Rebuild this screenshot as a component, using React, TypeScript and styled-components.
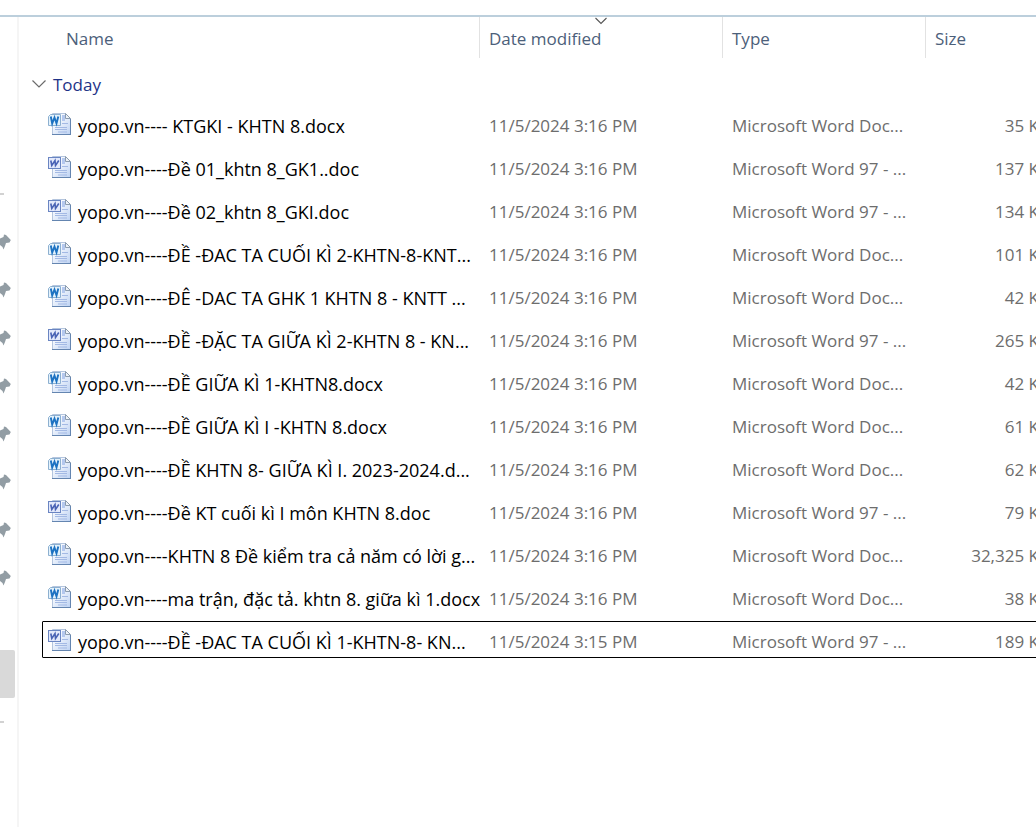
import React from "react";
import styled, { createGlobalStyle } from "styled-components";

const GlobalStyle = createGlobalStyle`
  *, *::before, *::after { box-sizing: border-box; }
  html, body, #root { height: 100%; }
  body {
    margin: 0;
    background: #fff;
    color: #000;
    font-family: "Segoe UI", "Open Sans", "Noto Sans", sans-serif;
    font-size: 17px;
    line-height: 24px;
  }
`;

const Window = styled.div`
  display: flex;
  flex-direction: column;
  min-height: 100%;
  overflow: hidden;
`;

const AddressStrip = styled.header`
  height: 17px;
  flex: none;
  border-bottom: 2px solid #bccfdc;
`;

const Body = styled.div`
  display: flex;
  flex: 1;
`;

const Sidebar = styled.nav`
  flex: none;
  width: 19px;
  padding: 176px 2px 0 0;
  border-right: 2px solid #f5f5f5;
`;

const Divider = styled.hr`
  width: 4px;
  height: 2px;
  margin: 0 0 23px;
  border: 0;
  background: #d2d2d2;
`;

const PlaceButton = styled.button<{ $selected?: boolean }>`
  display: flex;
  align-items: center;
  width: 100%;
  height: 48px;
  padding: 0;
  border: 0;
  border-radius: 0 2px 2px 0;
  background: ${(p) => (p.$selected ? "#d9d9d9" : "transparent")};
`;

const SelectedPlace = styled.div`
  margin-bottom: 23px;
`;

const Main = styled.main`
  flex: 1;
  min-width: 0;
  overflow: hidden;
`;

const FileTable = styled.table`
  display: block;
  width: max-content;
  min-width: 100%;
  padding-left: 23px;
`;

const Head = styled.thead`
  display: block;
`;

const Group = styled.tbody`
  display: block;
`;

const columns = "438px 243px 203px minmax(144px, 1fr)";

const HeadRow = styled.tr`
  display: grid;
  grid-template-columns: ${columns};
`;

const HeadCell = styled.th<{ $inset?: boolean }>`
  position: relative;
  height: 41px;
  padding: 0 0 0 ${(p) => (p.$inset ? "24px" : "9px")};
  border-right: 1px solid #e2e2e2;
  text-align: left;
  font-weight: 400;
`;

const SortButton = styled.button`
  height: 41px;
  padding: 2px 0 0;
  border: 0;
  background: none;
  color: #4c607a;
  font: inherit;
`;

const SortMark = styled.svg`
  position: absolute;
  top: 0;
  left: 50%;
  margin-left: -6px;
`;

const GroupRow = styled.tr`
  display: block;
  height: 47px;
`;

const GroupCell = styled.th`
  display: block;
  padding: 0;
  text-align: left;
  font-weight: 400;
`;

const GroupButton = styled.button`
  display: flex;
  align-items: center;
  gap: 7px;
  height: 53px;
  margin-left: -10px;
  padding: 0;
  border: 0;
  background: none;
  color: #1e3287;
  font: inherit;
`;

const FileRow = styled.tr<{ $focused?: boolean }>`
  display: grid;
  grid-template-columns: ${columns};
  height: 37px;
  margin-bottom: 6px;
  border-radius: 1px;
  outline: ${(p) => (p.$focused ? "1px solid #000" : "none")};
  outline-offset: -1px;
`;

const Cell = styled.td<{ $end?: boolean }>`
  padding: 9px ${(p) => (p.$end ? "20px" : "0")} 0 9px;
  color: #6d6d6d;
  text-align: ${(p) => (p.$end ? "right" : "left")};
  white-space: nowrap;
`;

const NameCell = styled(Cell)`
  display: flex;
  gap: 6px;
  padding: 9px 0 0 6px;
  color: #000;
  font-size: 18px;
`;

const FileIcon = styled.svg`
  flex: none;
  margin-top: -2px;
`;

type Kind = "docx" | "doc";

const files: { name: string; kind: Kind; time: string; size: string }[] = [
  { name: "yopo.vn---- KTGKI - KHTN 8.docx", kind: "docx", time: "3:16", size: "35" },
  { name: "yopo.vn----Đề 01_khtn 8_GK1..doc", kind: "doc", time: "3:16", size: "137" },
  { name: "yopo.vn----Đề 02_khtn 8_GKI.doc", kind: "doc", time: "3:16", size: "134" },
  { name: "yopo.vn----ĐỀ -ĐAC TA CUỐI KÌ 2-KHTN-8-KNT...", kind: "docx", time: "3:16", size: "101" },
  { name: "yopo.vn----ĐÊ -DAC TA GHK 1 KHTN 8 - KNTT ...", kind: "docx", time: "3:16", size: "42" },
  { name: "yopo.vn----ĐỀ -ĐẶC TA GIỮA KÌ 2-KHTN 8 - KN...", kind: "doc", time: "3:16", size: "265" },
  { name: "yopo.vn----ĐỀ GIỮA KÌ 1-KHTN8.docx", kind: "docx", time: "3:16", size: "42" },
  { name: "yopo.vn----ĐỀ GIỮA KÌ I -KHTN 8.docx", kind: "docx", time: "3:16", size: "61" },
  { name: "yopo.vn----ĐỀ KHTN 8- GIỮA KÌ I. 2023-2024.d...", kind: "docx", time: "3:16", size: "62" },
  { name: "yopo.vn----Đề KT cuối kì I môn KHTN 8.doc", kind: "doc", time: "3:16", size: "79" },
  { name: "yopo.vn----KHTN 8 Đề kiểm tra cả năm có lời g...", kind: "docx", time: "3:16", size: "32,325" },
  { name: "yopo.vn----ma trận, đặc tả. khtn 8. giữa kì 1.docx", kind: "docx", time: "3:16", size: "38" },
  { name: "yopo.vn----ĐỀ -ĐAC TA CUỐI KÌ 1-KHTN-8- KN...", kind: "doc", time: "3:15", size: "189" },
];

const typeNames: Record<Kind, string> = {
  docx: "Microsoft Word Doc...",
  doc: "Microsoft Word 97 - ...",
};

const pinnedPlaces = [1, 2, 3, 4, 5, 6, 7, 8];

function Pin() {
  return (
    <svg width="11" height="18" viewBox="0 0 11 18" aria-hidden="true">
      <path d="M0 5.500 3.500 4 4 1.500 6 2l4.800 5-1.300 2.500-3.500.5-1 3-1.500 3.500L2.500 14 0 12z" fill="#929da4" />
    </svg>
  );
}

function WordIcon({ kind }: { kind: Kind }) {
  return (
    <FileIcon width="24" height="24" viewBox="0 0 24 24" aria-hidden="true">
      <defs>
        <linearGradient id={"page-" + kind} x1="0" y1="0" x2="1" y2="1">
          <stop offset="0.3" stopColor="#f6f9fe" />
          <stop offset="1" stopColor="#bcd1f2" />
        </linearGradient>
      </defs>
      <path d="M4.500 1.500h13l5 5v16h-18z" fill={"url(#page-" + kind + ")"} stroke="#b4c5de" />
      <path d="M4 22.500h19M22.500 7v15.500" stroke="#6485b0" fill="none" />
      <path d="M17.500 1.500v5h5z" fill="#eef2f7" stroke="#8b9caf" />
      <path d="M14 3h3v6h-3z" fill="#b4c8ee" />
      <path d="M14 11.500h6M7 15.500h12M7 17.500h12M10 20h9" stroke="#a3b9e4" fill="none" />
      {kind === "docx" ? (
        <>
          <path d="M2.500 2.500h10v11H.5v-9z" fill="#e4f2fc" stroke="#8db0d0" />
          <path d="M2.800 4.500 4.200 11.500 6.500 5.500 8.500 11.500 10.300 4.500" fill="none" stroke="#1d72c2" strokeWidth="1.900" />
        </>
      ) : (
        <>
          <rect x=".5" y="2.500" width="12" height="11" fill="#e3e9fb" stroke="#6a85c2" />
          <path d="M2.800 5.500 3.800 10.500 7 5.500 7.500 10.500 10.800 5.500" fill="none" stroke="#4a63b5" strokeWidth="1.600" />
        </>
      )}
    </FileIcon>
  );
}

export default function App() {
  return (
    <>
      <GlobalStyle />
      <Window>
        <AddressStrip />
        <Body>
          <Sidebar aria-label="Quick access">
            <Divider />
            {pinnedPlaces.map((n) => (
              <PlaceButton key={n} aria-label={"Pinned folder " + n}>
                <Pin />
              </PlaceButton>
            ))}
            <PlaceButton aria-label="Recent folder" />
            <SelectedPlace>
              <PlaceButton $selected aria-label="Current folder" />
            </SelectedPlace>
            <Divider />
          </Sidebar>
          <Main>
            <FileTable>
              <Head>
                <HeadRow>
                  <HeadCell $inset scope="col">
                    <SortButton>Name</SortButton>
                  </HeadCell>
                  <HeadCell scope="col" aria-sort="descending">
                    <SortMark width="12" height="8" viewBox="0 0 12 8" aria-hidden="true">
                      <path d="M.5 1 6 6.500 11.500 1" fill="none" stroke="#555" strokeWidth="1.100" />
                    </SortMark>
                    <SortButton>Date modified</SortButton>
                  </HeadCell>
                  <HeadCell scope="col">
                    <SortButton>Type</SortButton>
                  </HeadCell>
                  <HeadCell scope="col">
                    <SortButton>Size</SortButton>
                  </HeadCell>
                </HeadRow>
              </Head>
              <Group>
                <GroupRow>
                  <GroupCell scope="rowgroup">
                    <GroupButton aria-expanded="true">
                      <svg width="14" height="12" viewBox="0 0 14 12" aria-hidden="true">
                        <path d="M.5 1.500 7 8 13.500 1.500" fill="none" stroke="#6b6b6b" strokeWidth="1.200" />
                      </svg>
                      Today
                    </GroupButton>
                  </GroupCell>
                </GroupRow>
                {files.map((file, i) => (
                  <FileRow key={file.name} $focused={i === files.length - 1}>
                    <NameCell>
                      <WordIcon kind={file.kind} />
                      <span>{file.name}</span>
                    </NameCell>
                    <Cell>11/5/2024 {file.time} PM</Cell>
                    <Cell>{typeNames[file.kind]}</Cell>
                    <Cell $end>{file.size} KB</Cell>
                  </FileRow>
                ))}
              </Group>
            </FileTable>
          </Main>
        </Body>
      </Window>
    </>
  );
}
